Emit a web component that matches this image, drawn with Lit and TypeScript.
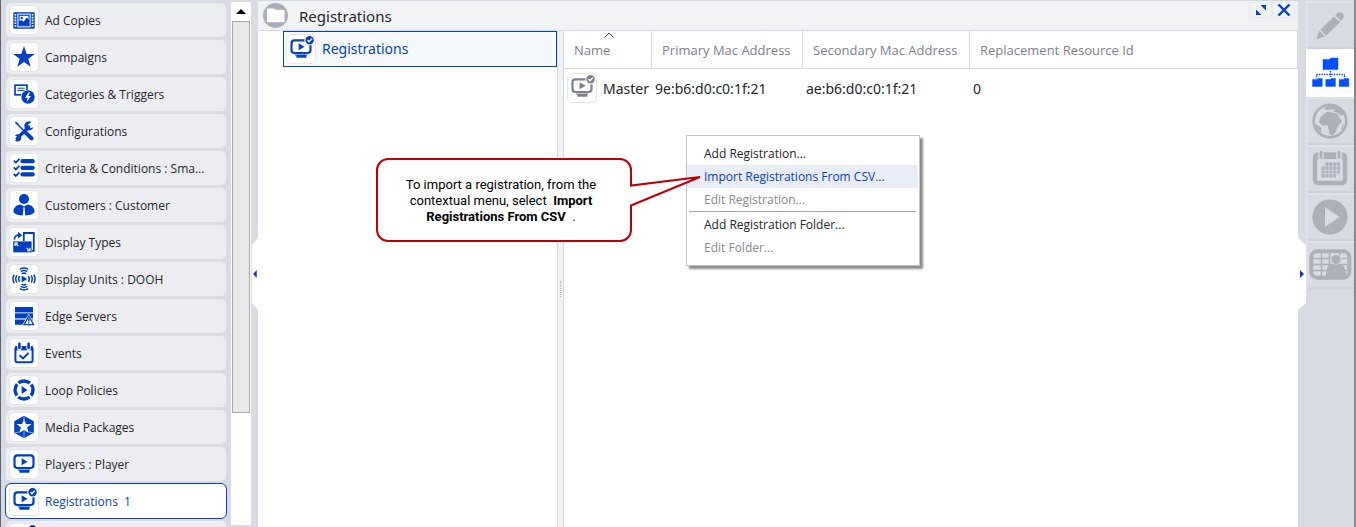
import { LitElement, html, css, svg } from "lit";
import { customElement, property, state } from "lit/decorators.js";
import { classMap } from "lit/directives/class-map.js";

const monitor = svg`
  <rect x="2.500" y="3.400" width="19" height="12.600" rx="3" fill="none" stroke="currentColor" stroke-width="2.200"/>
  <path d="M9.600 6.200v7l6-3.500z" fill="currentColor"/>
  <path d="M6 17.400h12v1.200H6zM7.400 18.600h10v2.200h-10z" fill="currentColor"/>`;

const check = svg`
  <circle cx="20.600" cy="3.200" r="5.200" fill="#fff"/>
  <circle cx="20.600" cy="3.200" r="4.200" fill="currentColor"/>
  <path d="M18.500 3.200l1.500 1.600 2.900-3.200" fill="none" stroke="#fff" stroke-width="1.400"/>`;

const icons: Record<string, unknown> = {
  film: svg`
    <rect x="1.3" y="4.3" width="21.4" height="16.4" rx="1.2" fill="currentColor"/>
    <rect x="5.4" y="5.6" width="13.2" height="13.8" fill="#fff"/>
    <rect x="6.4" y="6.600" width="11.2" height="11.800" fill="currentColor"/>
    <rect x="7.600" y="7.800" width="8.800" height="9.400" fill="#fff"/>
    <path d="M7 17.600v-4l2.600-1.600 2 1.800 3.200-4.400 2.400 3v5.200z" fill="currentColor"/>
    <circle cx="9.800" cy="10" r="1.200" fill="currentColor"/>
    <path d="M3.400 6v13.400M20.600 6v13.400" stroke="#fff" stroke-width="1.800" stroke-dasharray="1.600 1.200"/>`,
  star: svg`<path d="M12 .9l2.7 8h8.1l-6.5 4.9 2.4 8L12 17l-6.7 4.8 2.4-8L1.2 8.9h8.1z" fill="currentColor"/>`,
  trigger: svg`
    <rect x="3" y="3.2" width="12" height="9.6" fill="#fff" stroke="currentColor" stroke-width="1.7"/>
    <path d="M5.4 6.2h7.4M5.4 8.4h7.4" stroke="currentColor" stroke-width="1"/>
    <circle cx="16" cy="15" r="7.3" fill="#fff"/>
    <circle cx="16" cy="15" r="6.7" fill="currentColor"/>
    <path d="M16.6 10.2l-3.4 5.6h2.4l-.9 4.2 4.2-6h-2.6l1.6-3.8z" fill="#fff"/>`,
  tools: svg`
    <path d="M3.6 3.4l9 9.2" stroke="currentColor" stroke-width="1.4"/>
    <path d="M3 3.4l.8-.8 3.6 3-.8.8z" fill="currentColor"/>
    <path d="M13.2 13.2l6.4 6.2" stroke="currentColor" stroke-width="4" stroke-linecap="round" stroke-dasharray="1.2 .5"/>
    <path d="M5.2 19.4L16.6 8" stroke="currentColor" stroke-width="3.4" stroke-linecap="round"/>
    <path d="M19.5 3.1a4.6 4.6 0 1 0 1.8 5.1l-2.8 1-2.4-1.1-.3-2.4zM2.9 21.2a3.6 3.6 0 1 0-.2-4.4l2.4.2 1 1.6-1 1.7z" fill="currentColor"/>`,
  list: svg`
    <path d="M10.500 5.200h10.200M10.500 11.800h10.200M10.500 18.400h10.200" stroke="currentColor" stroke-width="4.200" stroke-linecap="round"/>
    <path d="M1.800 4.600l2 2 3.600-3.600M1.800 11.400l2 2 3.600-3.600M1.800 18l2 2 3.600-3.600" fill="none" stroke="currentColor" stroke-width="1.800"/>`,
  person: svg`
    <circle cx="12" cy="6" r="5" fill="currentColor"/>
    <path d="M1.400 19c0-4.800 3-7.200 7-7.600L12 13.400l3.600-2c4 .4 7 2.800 7 7.600-2.600 4.800-18.600 4.800-21.200 0z" fill="currentColor"/>
    <path d="M11 14.400h2l-.4 1.600.7 6.800h-2.600l.7-6.800z" fill="#fff"/>`,
  resize: svg`
    <path d="M11.800 11V3h10v17.800h-2" fill="none" stroke="currentColor" stroke-width="1.800"/>
    <path d="M1.200 11.400h18.400v11H1.200z" fill="currentColor"/>
    <path d="M2.400 9.600C2.400 6.400 4.200 5.200 7 5.200" fill="none" stroke="currentColor" stroke-width="1.700"/>
    <path d="M6 1.800L10.200 5.200 6 8.600z" fill="currentColor"/>
    <path d="M3 16v-3h3M3 13l3.400 3M18 17.800v3h-3M18 20.800l-3.400-3" fill="none" stroke="#fff" stroke-width="1.100"/>`,
  waves: svg`
    <path d="M9.600 8.400v7.200l5.600-3.600z" fill="currentColor"/>
    <path d="M7.600 9.200a5 5 0 0 0 0 5.600M4.800 8.400a7 7 0 0 0 0 7.200M2.200 7.600a9 9 0 0 0 0 8.800M16.400 9.200a5 5 0 0 1 0 5.600M19.200 8.400a7 7 0 0 1 0 7.200M21.800 7.600a9 9 0 0 1 0 8.800M9.800 6.800a4 4 0 0 1 4.400 0M8.800 4.600a6 6 0 0 1 6.400 0M7.800 2.400a8 8 0 0 1 8.400 0M9.800 17.200a4 4 0 0 0 4.400 0M8.800 19.400a6 6 0 0 0 6.400 0M7.800 21.600a8 8 0 0 0 8.400 0" fill="none" stroke="currentColor" stroke-width="1.500"/>`,
  server: svg`
    <path d="M3 3h18v5.200H3zM3 9.200h18v5H3zM3 15.400h18v5.400H3z" fill="currentColor"/>
    <path d="M3 8.700h18M3 14.800h18" stroke="#8fabe2" stroke-width="1"/>
    <path d="M16.800 9.800l7 12H9.800z" fill="#fff"/>
    <path d="M16.800 12l4.800 8.600H12z" fill="#fff" stroke="currentColor" stroke-width="1.300"/>
    <path d="M16.800 14.400v3M16.800 18.200v1.400" stroke="currentColor" stroke-width="1.500"/>`,
  event: svg`
    <rect x="3.400" y="6" width="17.200" height="15.200" rx="2" fill="#fff" stroke="currentColor" stroke-width="2"/>
    <path d="M3 5.400h18v4H3z" fill="currentColor"/>
    <path d="M7.400 3v4.400M16.600 3v4.400" stroke="#fff" stroke-width="4.400" stroke-linecap="round"/>
    <path d="M7.400 2.800v4.200M16.600 2.800v4.200" stroke="currentColor" stroke-width="2.600" stroke-linecap="round"/>
    <path d="M7.600 14.200l3.400 3.200 5.600-5.400" fill="none" stroke="currentColor" stroke-width="2"/>`,
  loop: svg`
    <circle cx="12" cy="12" r="9" fill="none" stroke="currentColor" stroke-width="3.400" stroke-dasharray="12.200 1.937" stroke-dashoffset="-8"/>
    <path d="M9.600 8v8l6-4z" fill="currentColor"/>`,
  package: svg`
    <path d="M12 .8l9.800 5.400v11.600L12 23.200l-9.800-5.400V6.200z" fill="currentColor"/>
    <path d="M12 4l1.900 5 5.500.1-4.300 3.500 1.700 5.400L12 15l-4.800 3 1.700-5.400-4.300-3.500 5.500-.1z" fill="#fff"/>
    <path d="M12 15v8M12 1v4M17 17l4.600 1.200M7 17l-4.600 1.200" stroke="#b3c6ec" stroke-width=".8"/>`,
  player: monitor,
  registration: svg`${monitor}${check}`,
};

const railIcons: Record<string, unknown> = {
  pencil: svg`<path d="M10.600 38l2.600-8.200 5.800 5.600zM14.200 28.800l13.800-13.400 6 5.800-13.800 13.400zM29.200 14.200l3-2.600c2.600-1.800 6.800 2.200 5.400 5l-2.600 3.400z" fill="currentColor"/>`,
  tree: svg`
    <path d="M17 11.400h6.400l1.600-1.400h7v11.400H17zM6.600 31.400h4.400l1.200-1h4v8H6.600zM19.800 31.400h4.400l1.200-1h4v8h-9.600zM33.200 31.400h4.400l1.200-1h4v8h-9.600z" fill="currentColor" stroke="currentColor" stroke-width=".5" stroke-linejoin="round" transform="translate(0 -1)"/>
    <path d="M10.400 25.500h28.400M10.500 26.500v3M24.500 22v6M38.500 26.500v3" fill="none" stroke="currentColor" stroke-width="1.400" stroke-dasharray="1.400 1.100"/>`,
  globe: svg`
    <circle cx="24" cy="24" r="16.300" fill="none" stroke="currentColor" stroke-width="2.600"/>
    <path d="M17.600 17.400l4-2.600 5.400 1 5 1 1.400 4.800 2.800 1.400-1.200 3-3.400 3.400-1.400 5-3.400 3.600-3-.4-1.200-5-1-4.400-5.400.2-3-3.200.6-4.400z" fill="currentColor"/>
    <path d="M17.800 11.400l3.800-2.600 9.400.8 5 4.400 2.400 4-3.800.4-3.600-3-3.600-.8 1-2-4.600-.4-2.400 1.400zM8.600 27.400l4 .8 2.800 3-.4 5zM36.600 27.600l1.600-1-1.800 5.400-1.600.8z" fill="currentColor"/>`,
  calendar: svg`
    <rect x="9" y="9.500" width="30" height="28.500" rx="3" fill="none" stroke="currentColor" stroke-width="4.400"/>
    <path d="M8 9h32v5H8z" fill="currentColor"/>
    <path d="M15 7v5M33 7v5" stroke="#d6dbe4" stroke-width="5.600" stroke-linecap="round"/>
    <path d="M15 7v5M33 7v5" stroke="currentColor" stroke-width="3" stroke-linecap="round"/>
    <path d="M19.400 19.200h14.400M15.500 23.100h18.300M15.500 27h18.300M15.500 30.900h14.400" stroke="currentColor" stroke-width="3.200" stroke-dasharray="3.200 .7"/>`,
  play: svg`<circle cx="24" cy="24" r="17.600" fill="currentColor"/><path d="M19 14v20l14.600-10z" fill="#d6dbe4"/>`,
  map: svg`
    <rect x="5.300" y="10.300" width="38" height="26.400" rx="6" fill="none" stroke="currentColor" stroke-width="4"/>
    <path d="M7 17.500h34M7 23.500h34M7 29.500h34M15.500 12v23M23.500 12v23M33.500 12v23" stroke="currentColor" stroke-width="1.500"/>
    <circle cx="30" cy="18.500" r="5.400" fill="#d6dbe4"/>
    <circle cx="30" cy="18.500" r="4.600" fill="currentColor"/>
    <path d="M19.500 36c1-6 1.500-11.500 4-12.500h12.500c2.500 1 3.500 6.500 4.500 12.500z" fill="currentColor"/>`,
};

@customElement("icon-tile")
class IconTile extends LitElement {
  @property() name = "";

  static styles = css`
    :host {
      display: inline-flex;
      flex: none;
      box-sizing: border-box;
      width: 30px;
      height: 30px;
      align-items: center;
      justify-content: center;
      background: #fff;
      border: 1px solid #e4e5e9;
      border-radius: 5px;
    }
    .glyph {
      display: block;
      width: 24px;
      height: 24px;
      overflow: visible;
    }
  `;

  render() {
    return html`<svg class="glyph" viewBox="0 0 24 24" aria-hidden="true">${icons[this.name]}</svg>`;
  }
}

interface NavItem {
  icon: string;
  label: string;
}

const navItems: NavItem[] = [
  { icon: "film", label: "Ad Copies" },
  { icon: "star", label: "Campaigns" },
  { icon: "trigger", label: "Categories & Triggers" },
  { icon: "tools", label: "Configurations" },
  { icon: "list", label: "Criteria & Conditions : Sma..." },
  { icon: "person", label: "Customers : Customer" },
  { icon: "resize", label: "Display Types" },
  { icon: "waves", label: "Display Units : DOOH" },
  { icon: "server", label: "Edge Servers" },
  { icon: "event", label: "Events" },
  { icon: "loop", label: "Loop Policies" },
  { icon: "package", label: "Media Packages" },
  { icon: "player", label: "Players : Player" },
  { icon: "registration", label: "Registrations\u00a0 1" },
  { icon: "registration", label: "" },
];

@customElement("side-nav")
class SideNav extends LitElement {
  @state() private selected = 13;

  static styles = css`
    :host {
      display: flex;
      min-height: 0;
      background: #d6dbe4;
      border-left: 1px solid #5d6474;
      overflow: hidden;
    }
    .list {
      flex: 1;
      margin: 0;
      padding: 2px 0 0;
      list-style: none;
      overflow: hidden;
    }
    .entry {
      padding: 0 4px;
      border-bottom: 1px solid #dfdadd;
    }
    .item {
      display: flex;
      align-items: center;
      gap: 6px;
      box-sizing: border-box;
      width: 100%;
      height: 36px;
      padding: 0 3px;
      border: 1px solid transparent;
      border-radius: 6px;
      background: #ecedf1 padding-box;
      color: #24262c;
      font: 12px/16px "Open Sans", sans-serif;
      text-align: left;
      white-space: nowrap;
    }
    .item.selected {
      background: #fff;
      border-color: #0a41be;
      color: #0a41be;
    }
    .label {
      padding-top: 1px;
    }
    .tile {
      color: #0040c0;
    }
    .scroll {
      display: flex;
      flex-direction: column;
      width: 20px;
      margin: 2px 0;
      background: #fff;
    }
    .up {
      height: 19px;
      padding: 0;
      border: 0;
      background: #fff;
    }
    .arrow {
      display: block;
      margin: 0 auto;
    }
    .thumb {
      height: 75%;
      margin: 0 1px;
      box-sizing: border-box;
      border: 1px solid #a9a9ab;
      background: #e9e9e9;
    }
  `;

  render() {
    return html`
      <ul class="list">
        ${navItems.map(
          (item, i) => html`<li class="entry">
            <button
              class=${classMap({ item: true, selected: i === this.selected })}
              @click=${() => (this.selected = i)}
            >
              <icon-tile class="tile" name=${item.icon}></icon-tile>
              <span class="label">${item.label}</span>
            </button>
          </li>`
        )}
      </ul>
      <div class="scroll">
        <button class="up">
          <svg class="arrow" width="10" height="5" viewBox="0 0 10 5"><path d="M0 5l5-5 5 5z" /></svg>
        </button>
        <div class="thumb"></div>
      </div>
    `;
  }
}

@customElement("pane-handle")
class PaneHandle extends LitElement {
  @property() side = "left";

  static styles = css`
    :host {
      display: flex;
      align-items: center;
      box-sizing: border-box;
      padding-top: 20px;
      background: #d6dbe4;
    }
    .grip {
      display: block;
      width: 100%;
      height: 72px;
      padding: 0;
      border: 0;
      background: none;
    }
    .shape {
      display: block;
      width: 100%;
      height: 100%;
    }
  `;

  render() {
    const left = this.side === "left";
    return html`<button class="grip">
      <svg class="shape" viewBox="0 0 8 72" preserveAspectRatio="none">
        ${left
          ? svg`<path d="M8 0L1 7v58l7 7z" fill="#fff"/><path d="M6.500 32v8L2.500 36z" fill="#1532c0"/>`
          : svg`<path d="M0 0l8 7v58l-8 7z" fill="#fff"/><path d="M2 32v8l4-4z" fill="#1532c0"/>`}
      </svg>
    </button>`;
  }
}

@customElement("tool-rail")
class ToolRail extends LitElement {
  @state() private active = "tree";

  static styles = css`
    :host {
      display: block;
      padding-top: 1px;
      background: #d6dbe4;
      border-right: 2px solid #85878c;
    }
    .tool {
      display: flex;
      align-items: center;
      justify-content: center;
      box-sizing: border-box;
      width: 100%;
      height: 48px;
      padding: 0;
      border: 0;
      box-shadow: inset 2px 2px #dfe3e9, inset 0 -2px #cbd0d9;
      background: #d6dbe4;
      color: #adb0b9;
    }
    .tool.active {
      background: #fff;
      box-shadow: none;
      color: #0050ff;
    }
    .glyph {
      flex: none;
      width: 48px;
      height: 48px;
    }
  `;

  render() {
    return Object.keys(railIcons).map(
      (name) => html`<button
        class=${classMap({ tool: true, active: name === this.active })}
        @click=${() => (this.active = name)}
      >
        <svg class="glyph" viewBox="0 0 48 48" aria-hidden="true">${railIcons[name]}</svg>
      </button>`
    );
  }
}

@customElement("registration-table")
class RegistrationTable extends LitElement {
  static styles = css`
    :host {
      display: block;
      background: #fff;
      border-left: 1px solid #d5d9e3;
    }
    .grid {
      width: 100%;
      border-collapse: separate;
      border-spacing: 0;
      table-layout: fixed;
      font-family: "Noto Sans", sans-serif;
    }
    .name {
      width: 88px;
    }
    .primary {
      width: 151px;
    }
    .secondary {
      width: 167px;
    }
    .head {
      position: relative;
      box-sizing: border-box;
      height: 38px;
      padding: 1px 0 0 10px;
      border-right: 1px solid #d5d9e3;
      border-bottom: 1px solid #d5d9e3;
      color: #7c818c;
      font-family: "Open Sans", sans-serif;
      font-size: 13px;
      font-weight: 400;
      text-align: left;
      white-space: nowrap;
    }
    .sort {
      position: absolute;
      top: 1px;
      left: 40px;
    }
    .cell {
      height: 38px;
      padding: 0 0 0 3px;
      color: #24262c;
      font-size: 14px;
      white-space: nowrap;
    }
    .first {
      display: flex;
      align-items: center;
      gap: 6px;
    }
    .tile {
      color: #7c818c;
    }
  `;

  render() {
    return html`<table class="grid">
      <colgroup>
        <col class="name" />
        <col class="primary" />
        <col class="secondary" />
        <col />
      </colgroup>
      <thead>
        <tr>
          <th class="head">
            <svg class="sort" width="10" height="6" viewBox="0 0 10 6">
              <path d="M.5 5.500L5 1l4.500 4.500" fill="none" stroke="#50535a" />
            </svg>
            Name
          </th>
          <th class="head">Primary Mac Address</th>
          <th class="head">Secondary Mac Address</th>
          <th class="head">Replacement Resource Id</th>
        </tr>
      </thead>
      <tbody>
        <tr>
          <td class="cell">
            <div class="first"><icon-tile class="tile" name="registration"></icon-tile>Master</div>
          </td>
          <td class="cell">9e:b6:d0:c0:1f:21</td>
          <td class="cell">ae:b6:d0:c0:1f:21</td>
          <td class="cell">0</td>
        </tr>
      </tbody>
    </table>`;
  }
}

@customElement("context-menu")
class ContextMenu extends LitElement {
  static styles = css`
    :host {
      display: block;
      box-sizing: border-box;
      padding: 6px 1px 6px 0;
      background: #fff;
      border: 1px solid #c3c4c7;
      box-shadow: 3px 3px 2px rgba(0, 0, 0, 0.45);
    }
    .command {
      display: block;
      width: 100%;
      height: 23px;
      padding: 0 17px;
      border: 0;
      background: #fff;
      color: #24262c;
      font: 12px/22px "Open Sans", sans-serif;
      text-align: left;
      white-space: nowrap;
    }
    .command:disabled {
      color: #868a94;
    }
    .command.hot {
      background: #e9edf8;
      color: #0a41be;
    }
    .rule {
      height: 1px;
      margin: 0 2px 1px;
      border: 0;
      background: #a5a6a9;
    }
  `;

  render() {
    const command = (label: string, disabled = false, hot = false) =>
      html`<button class=${classMap({ command: true, hot })} ?disabled=${disabled}>${label}</button>`;
    return html`
      ${command("Add Registration...")} ${command("Import Registrations From CSV...", false, true)}
      ${command("Edit Registration...", true)}
      <hr class="rule" />
      ${command("Add Registration Folder...")} ${command("Edit Folder...", true)}
    `;
  }
}

@customElement("hint-callout")
class HintCallout extends LitElement {
  static styles = css`
    :host {
      display: block;
      pointer-events: none;
    }
    .bubble {
      display: grid;
      width: 326px;
    }
    .outline,
    .text {
      grid-area: 1 / 1;
    }
    .text {
      width: 210px;
      margin: 0;
      padding: 19px 20px 0 20px;
      color: #000;
      font: 13px/16px Roboto, sans-serif;
      text-align: center;
    }
    .strong {
      font-weight: 700;
    }
  `;

  render() {
    return html`<div class="bubble">
      <svg class="outline" width="326" height="84" viewBox="0 0 326 84">
        <path
          d="M12 1h232a11 11 0 0 1 11 11v15.500L324 19 255 47.500V72a11 11 0 0 1-11 11H12A11 11 0 0 1 1 72V12A11 11 0 0 1 12 1z"
          fill="#fff"
          stroke="#bc0006"
          stroke-width="2"
        />
      </svg>
      <p class="text">
        To import a registration, from the contextual menu, select&nbsp;
        <b class="strong">Import Registrations From CSV</b>&nbsp; .
      </p>
    </div>`;
  }
}

@customElement("app-root")
class AppRoot extends LitElement {
  static styles = css`
    :host {
      display: grid;
      grid-template-columns: 251px 7px minmax(0, 1fr) 8px 50px;
      height: 100vh;
      overflow: hidden;
      background: #fff;
      font-family: "Noto Sans", sans-serif;
      color: #24262c;
    }
    .workspace {
      position: relative;
      display: flex;
      flex-direction: column;
      min-width: 0;
      border-top: 1px solid #d5d9e3;
    }
    .titlebar {
      display: flex;
      align-items: center;
      gap: 11px;
      height: 29px;
      padding-left: 5px;
      background: #f1f2f4;
      border-bottom: 1px solid #d5d9e3;
    }
    .title {
      flex: 1;
      margin: 0;
      font-size: 15px;
      font-weight: 400;
    }
    .actions {
      display: flex;
      align-self: flex-start;
      padding: 1px 3px 0 0;
    }
    .action {
      display: grid;
      place-items: center;
      width: 23px;
      height: 16px;
      padding: 0;
      border: 1px solid #e9eaed;
      background: none;
    }
    .panes {
      flex: 1;
      display: grid;
      grid-template-columns: 299px 6px minmax(0, 1fr);
    }
    .tree {
      padding-left: 25px;
    }
    .node {
      display: flex;
      align-items: center;
      gap: 6px;
      box-sizing: border-box;
      width: 100%;
      height: 36px;
      padding: 0 2px;
      border: 1px solid #0a41be;
      background: #f5f8fd;
      color: #0a41be;
      font: 14px/20px "Noto Sans", sans-serif;
    }
    .divider {
      display: grid;
      place-items: center;
      padding-top: 20px;
      background: #f1f2f4;
      border-left: 1px solid #d5d9e3;
    }
    .dots {
      height: 16px;
      border-left: 1px dotted #a9aeb9;
    }
    .menu {
      position: absolute;
      top: 134px;
      left: 428px;
      width: 234px;
    }
    .hint {
      position: absolute;
      top: 157px;
      left: 118px;
    }
  `;

  render() {
    return html`
      <side-nav></side-nav>
      <pane-handle side="left"></pane-handle>
      <main class="workspace">
        <header class="titlebar">
          <svg width="25" height="25" viewBox="0 0 25 25">
            <circle cx="12.500" cy="12.500" r="12.500" fill="#a9afb9" />
            <path
              d="M5 5.500h5.500c1 0 1.200.5 1.600 1.200H20c1 0 1.500.5 1.500 1.500v9.500c0 1-.5 1.500-1.500 1.500H5.500c-1 0-1.500-.5-1.500-1.500V6.500c0-.6.400-1 1-1z"
              fill="#fff"
            />
          </svg>
          <h1 class="title">Registrations</h1>
          <div class="actions">
            <button class="action">
              <svg width="10" height="10" viewBox="0 0 10 10">
                <path d="M4.500 0H10v5.500zM0 4.500V10h5.500z" fill="#0a41be" />
              </svg>
            </button>
            <button class="action">
              <svg width="14" height="12" viewBox="0 0 14 12">
                <path d="M1.500.5l11 11M12.500.5l-11 11" stroke="#0a41be" stroke-width="2.400" />
              </svg>
            </button>
          </div>
        </header>
        <div class="panes">
          <nav class="tree">
            <button class="node">
              <icon-tile name="registration"></icon-tile>Registrations
            </button>
          </nav>
          <div class="divider"><span class="dots"></span></div>
          <registration-table></registration-table>
        </div>
        <context-menu class="menu"></context-menu>
        <hint-callout class="hint"></hint-callout>
      </main>
      <pane-handle side="right"></pane-handle>
      <tool-rail></tool-rail>
    `;
  }
}
